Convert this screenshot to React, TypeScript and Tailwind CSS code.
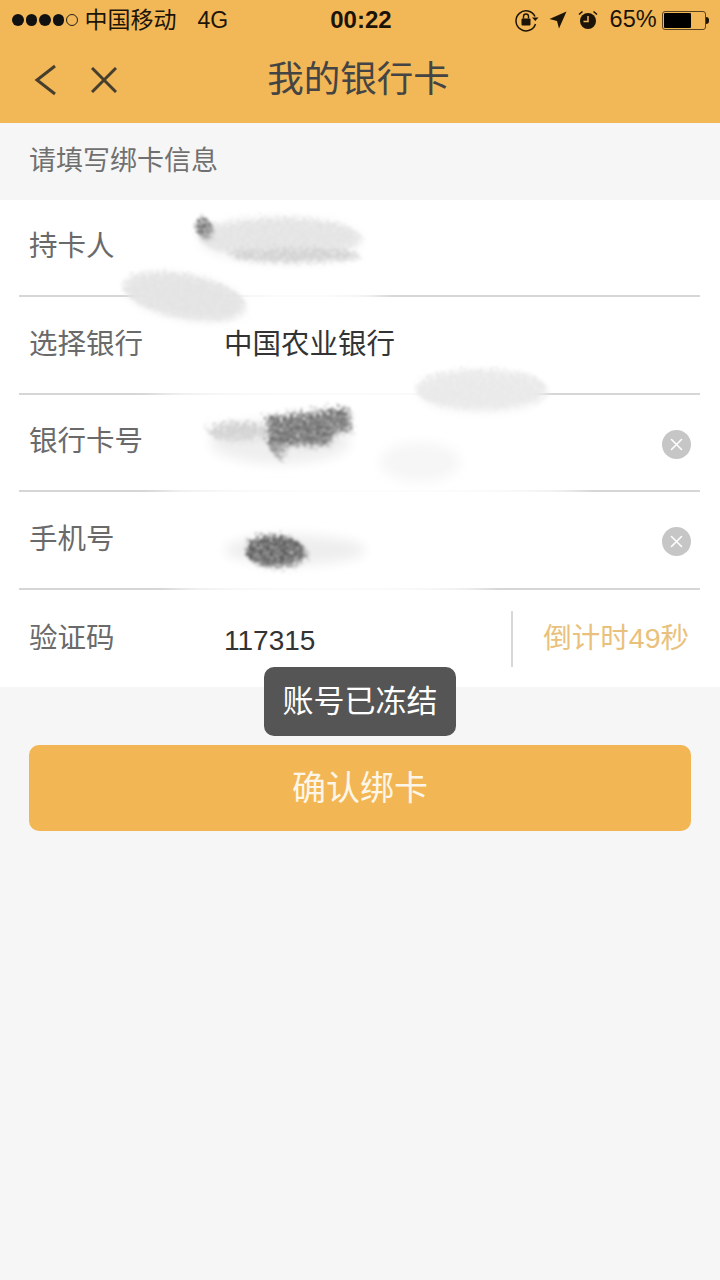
import React from 'react';

const font = { fontFamily: '"Liberation Sans", "Noto Sans CJK SC", sans-serif' };

const ClearIcon = () => (
  <div className="flex h-[29px] w-[29px] items-center justify-center rounded-full bg-[#c6c6c6]">
    <svg width="15" height="15" viewBox="0 0 15 15" fill="none" stroke="#fff" strokeWidth="1.6" strokeLinecap="round">
      <path d="M2.5 2.5l10 10M12.5 2.5l-10 10" />
    </svg>
  </div>
);

const Row = ({ label, last, children }: { label: string; last?: boolean; children?: React.ReactNode }) => (
  <div className={last ? 'relative flex h-[97.4px] items-center pl-[29px]' : 'relative flex h-[97.4px] items-center pb-[4px] pl-[29px]'}>
    <div className="w-[195px] shrink-0 text-[28.5px] leading-none text-[#6a6a6a]">{label}</div>
    {children}
    {!last && <div className="absolute bottom-0 left-[19px] right-[20px] h-[2px] bg-[#d6d6d6]" />}
  </div>
);

const StatusBar = () => (
  <div className="flex h-[40px] items-center pl-[12px] pr-[10px] text-[#1c1408]">
    <div className="flex items-center gap-[2px]">
      <div className="h-[11.5px] w-[11.5px] rounded-full bg-[#111]" />
      <div className="h-[11.5px] w-[11.5px] rounded-full bg-[#111]" />
      <div className="h-[11.5px] w-[11.5px] rounded-full bg-[#111]" />
      <div className="h-[11.5px] w-[11.5px] rounded-full bg-[#111]" />
      <div className="h-[11.5px] w-[11.5px] rounded-full border border-[#222]" />
    </div>
    <span className="ml-[7px] text-[23px] leading-none">中国移动</span>
    <span className="ml-[21px] text-[23px] leading-none">4G</span>
    <span className="ml-[102px] text-[24px] font-bold leading-none">00:22</span>
    <svg className="ml-[123px]" width="24" height="24" viewBox="0 0 24 24" fill="none">
      <path d="M20 8.5A10 10 0 1 0 20.5 16" stroke="#1c1408" strokeWidth="1.5" />
      <path d="M17 9.5h6.5l-3.2 3.5z" fill="#1c1408" />
      <rect x="6.5" y="10.5" width="9" height="7" rx="1" fill="#1c1408" />
      <path d="M8.5 10.5V8.5a2.5 2.5 0 0 1 5 0v2" stroke="#1c1408" strokeWidth="1.4" />
    </svg>
    <svg className="ml-[10px]" width="18" height="18" viewBox="0 0 18 18">
      <path d="M17.5 0.5L10 17.5 8 10 0.5 8z" fill="#1c1408" />
    </svg>
    <svg className="ml-[11px]" width="20" height="20" viewBox="0 0 20 20" fill="none">
      <circle cx="10" cy="11" r="8" fill="#1c1408" />
      <path d="M10 6v5.5H5.5" stroke="#f2b757" strokeWidth="1.5" />
      <path d="M1 4.5L4.5 1.5M19 4.5L15.5 1.5" stroke="#1c1408" strokeWidth="1.6" />
    </svg>
    <span className="ml-[12px] text-[23.5px] leading-none">65%</span>
    <div className="ml-[5px] flex items-center">
      <div className="h-[19px] w-[44px] rounded-[3px] border border-[#5a4420] p-[1px]">
        <div className="h-full w-[27px] rounded-[1px] bg-black" />
      </div>
      <div className="h-[7px] w-[3px] rounded-r-full bg-[#1c1408]" />
    </div>
  </div>
);

const Smudges = () => (
  <svg className="pointer-events-none absolute left-0 top-0" width="720" height="1280" viewBox="0 0 720 1280">
    <defs>
      <filter id="grain" x="-30%" y="-50%" width="160%" height="200%">
        <feTurbulence type="fractalNoise" baseFrequency="0.3 0.55" numOctaves="3" seed="7" result="noise" />
        <feColorMatrix in="noise" type="matrix" values="0 0 0 0 0  0 0 0 0 0  0 0 0 0 0  0 0 0 2.6 -0.45" result="mask" />
        <feDisplacementMap in="SourceGraphic" in2="noise" scale="22" result="moved" />
        <feComposite in="moved" in2="mask" operator="in" />
        <feGaussianBlur stdDeviation="1.5" />
      </filter>
      <filter id="wide" x="-30%" y="-50%" width="160%" height="200%">
        <feGaussianBlur stdDeviation="6" />
      </filter>
      <filter id="soft" x="-30%" y="-50%" width="160%" height="200%">
        <feGaussianBlur stdDeviation="9" />
      </filter>
    </defs>
    <g filter="url(#soft)" fill="#fff">
      <ellipse cx="300" cy="297" rx="85" ry="14" />
      <ellipse cx="340" cy="395" rx="190" ry="14" />
      <ellipse cx="370" cy="492" rx="215" ry="16" />
      <ellipse cx="330" cy="590" rx="160" ry="14" />
    </g>
    <g filter="url(#wide)">
      <ellipse cx="280" cy="442" rx="70" ry="22" fill="#efefef" />
      <ellipse cx="420" cy="462" rx="40" ry="20" fill="#f6f6f6" />
      <ellipse cx="295" cy="550" rx="70" ry="15" fill="#eeeeee" />
      <ellipse cx="280" cy="240" rx="80" ry="21" fill="#f0f0f0" />
      <ellipse cx="185" cy="297" rx="58" ry="20" fill="#ececec" transform="rotate(10 185 297)" />
      <ellipse cx="482" cy="392" rx="62" ry="18" fill="#f0f0f0" />
    </g>
    <g filter="url(#grain)">
      <ellipse cx="280" cy="238" rx="82" ry="19" fill="#e2e2e2" />
      <ellipse cx="295" cy="256" rx="66" ry="7" fill="#cfcfcf" />
      <ellipse cx="205" cy="229" rx="8" ry="10" fill="#5c5c5c" />
      <ellipse cx="185" cy="297" rx="62" ry="22" fill="#e2e2e2" transform="rotate(10 185 297)" />
      <ellipse cx="482" cy="390" rx="66" ry="20" fill="#e8e8e8" />
      <ellipse cx="238" cy="432" rx="30" ry="10" fill="#cfcfcf" />
      <path d="M268 418l82-10 2 22-16 4-10 12h-58z" fill="#666666" />
      <path d="M268 444l20 0-8 18z" fill="#8a8a8a" />
      <ellipse cx="276" cy="552" rx="30" ry="16" fill="#545454" />
    </g>
  </svg>
);

const App = () => {
  return (
    <div className="relative flex h-[1280px] w-[720px] flex-col overflow-hidden bg-[#f6f6f6]" style={font}>
      <div className="h-[123px] bg-[#f2b757]">
        <StatusBar />
        <div className="relative flex h-[80px] items-center justify-center pr-[3px]">
          <div className="absolute left-[34px] top-[24px] flex items-center gap-[33px]">
            <svg width="24" height="32" viewBox="0 0 24 32" fill="none" stroke="#473f2e" strokeWidth="3">
              <path d="M21 2L3 16l18 14" />
            </svg>
            <svg width="26" height="26" viewBox="0 0 26 26" fill="none" stroke="#473f2e" strokeWidth="3">
              <path d="M1 1l24 24M25 1L1 25" />
            </svg>
          </div>
          <span className="text-[36.5px] leading-none text-[#444]">我的银行卡</span>
        </div>
      </div>

      <div className="flex h-[77px] items-center pl-[29px] text-[27px] leading-none text-[#707070]">请填写绑卡信息</div>

      <div className="bg-white">
        <Row label="持卡人" />
        <Row label="选择银行">
          <span className="text-[28.5px] leading-none text-[#333]">中国农业银行</span>
        </Row>
        <Row label="银行卡号">
          <div className="ml-auto mr-[29px] mt-[6px]"><ClearIcon /></div>
        </Row>
        <Row label="手机号">
          <div className="ml-auto mr-[29px] mt-[6px]"><ClearIcon /></div>
        </Row>
        <Row label="验证码" last>
          <span className="mt-[6px] text-[28px] leading-none text-[#333]">117315</span>
          <div className="ml-auto mr-[31px] flex items-center">
            <div className="mr-[30px] mt-[2px] h-[56px] w-[2px] bg-[#d8d8d8]" />
            <span className="text-[28.5px] leading-none text-[#e9c17c]">倒计时49秒</span>
          </div>
        </Row>
      </div>

      <div className="mx-[29px] mt-[58px] flex h-[86px] items-center justify-center rounded-[10px] bg-[#f2b655] text-[34px] leading-none text-[#fdf6e8]">
        确认绑卡
      </div>

      <Smudges />

      <div className="absolute left-[264px] top-[667px] flex h-[69px] w-[192px] items-center justify-center rounded-[10px] bg-[#555] text-[31px] leading-none text-white">
        账号已冻结
      </div>
    </div>
  );
};

export default App;
